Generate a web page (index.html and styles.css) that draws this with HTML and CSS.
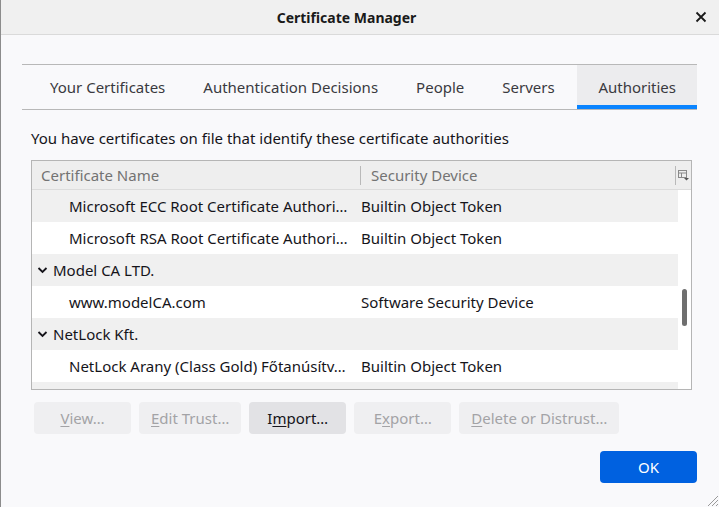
FILE: index.html
```html
<!DOCTYPE html>
<html>
<head>
<meta charset="utf-8">
<link rel="stylesheet" href="styles.css">
</head>
<body>
<div class="window">
  <div class="titlebar">
    <span class="title">Certificate Manager</span>
    <span class="close">
      <svg width="12" height="12" viewBox="0 0 12 12"><path d="M1.5 1.5 L10.5 10.5 M10.5 1.5 L1.5 10.5" stroke="#1a1a1a" stroke-width="1.8" fill="none"/></svg>
    </span>
  </div>
  <div class="content">
    <div class="tabs">
      <div class="tab">Your Certificates</div>
      <div class="tab">Authentication Decisions</div>
      <div class="tab">People</div>
      <div class="tab">Servers</div>
      <div class="tab active">Authorities</div>
    </div>
    <div class="panel">
      <p class="desc">You have certificates on file that identify these certificate authorities</p>
      <div class="tree">
        <div class="tree-head">
          <div class="col col-name">Certificate Name</div>
          <div class="col col-dev">Security Device</div>
          <div class="picker">
            <svg width="11" height="11" viewBox="0 0 11 11"><rect x="0.5" y="0.5" width="8" height="7" fill="none" stroke="#8a8a8a"/><path d="M0.5 3 H8.5 M3.5 3 V7.5" stroke="#8a8a8a"/><path d="M6 8 H11 L8.5 10.5 Z" fill="#555"/></svg>
          </div>
        </div>
        <div class="tree-body">
          <div class="rows">
            <div class="row odd"><div class="cell name child">Microsoft ECC Root Certificate Authori…</div><div class="cell dev">Builtin Object Token</div></div>
            <div class="row"><div class="cell name child">Microsoft RSA Root Certificate Authori…</div><div class="cell dev">Builtin Object Token</div></div>
            <div class="row odd"><div class="cell name parent"><svg class="twisty" width="11" height="10" viewBox="0 0 11 10"><path d="M1.5 3 L5.5 7 L9.5 3" stroke="#15141a" stroke-width="1.8" fill="none"/></svg>Model CA LTD.</div><div class="cell dev"></div></div>
            <div class="row"><div class="cell name child">www.modelCA.com</div><div class="cell dev">Software Security Device</div></div>
            <div class="row odd"><div class="cell name parent"><svg class="twisty" width="11" height="10" viewBox="0 0 11 10"><path d="M1.5 3 L5.5 7 L9.5 3" stroke="#15141a" stroke-width="1.8" fill="none"/></svg>NetLock Kft.</div><div class="cell dev"></div></div>
            <div class="row"><div class="cell name child">NetLock Arany (Class Gold) Főtanúsítv…</div><div class="cell dev">Builtin Object Token</div></div>
            <div class="row odd partial"><div class="cell name child"></div><div class="cell dev"></div></div>
          </div>
          <div class="scrollbar"><div class="thumb"></div></div>
        </div>
      </div>
      <div class="buttons">
        <button class="btn disabled"><u>V</u>iew…</button>
        <button class="btn disabled"><u>E</u>dit Trust…</button>
        <button class="btn">I<u>m</u>port…</button>
        <button class="btn disabled">E<u>x</u>port…</button>
        <button class="btn disabled"><u>D</u>elete or Distrust…</button>
      </div>
    </div>
    <div class="footer">
      <button class="btn primary">OK</button>
    </div>
  </div>
  <svg class="grip" width="14" height="14" viewBox="0 0 14 14"><path d="M13 3 L3 13 M13 7 L7 13 M13 11 L11 13" stroke="#9a9a9a" stroke-width="1"/></svg>
</div>
</body>
</html>
```

FILE: styles.css
```css
* { box-sizing: border-box; }
html, body { margin: 0; padding: 0; }
body {
  width: 719px;
  height: 507px;
  overflow: hidden;
  font-family: "Noto Sans", "Open Sans", sans-serif;
  font-size: 15px;
  color: #15141a;
  background: #f9f9fb;
}
.window {
  position: relative;
  width: 719px;
  height: 507px;
  border-left: 1px solid #8c8c8c;
  background: #f9f9fb;
}
.titlebar {
  position: relative;
  height: 35px;
  background: #f0f0f0;
  border-bottom: 1px solid #dadada;
  display: flex;
  align-items: center;
  justify-content: center;
  padding-right: 27px;
}
.title {
  font-weight: bold;
  font-size: 14px;
  color: #1a1a1a;
}
.close {
  position: absolute;
  right: 12px;
  top: 11px;
  display: flex;
}
.content {
  padding: 29px 22px 0 21px;
}
.tabs {
  display: flex;
  border-top: 1px solid #b8b8b8;
  border-bottom: 1px solid #b8b8b8;
  padding-left: 9px;
  height: 46px;
}
.tab {
  flex: none;
  white-space: nowrap;
  height: 44px;
  padding: 0 19px;
  display: flex;
  align-items: center;
  color: #3a3a3f;
  font-size: 15px;
}
.tab.active {
  margin-left: auto;
  background: #ececee;
  border-bottom: 4px solid #0a84ff;
  padding: 4px 21px 0 21px;
  height: 44px;
}
.panel {
  padding: 0 5px 0 9px;
}
.desc {
  margin: 18px 0 12px 0;
  line-height: 20px;
  font-size: 15px;
}
.tree {
  border: 1px solid #b5b5b5;
  background: #ffffff;
  height: 230px;
  display: flex;
  flex-direction: column;
  overflow: hidden;
}
.tree-head {
  display: flex;
  align-items: center;
  height: 29px;
  background: #eeeeee;
  border-bottom: 1px solid #dcdcdc;
  color: #737373;
  font-size: 15px;
  flex: none;
}
.col { height: 29px; display: flex; align-items: center; }
.col-name {
  width: 328px;
  padding-left: 9px;
}
.col-dev {
  flex: 1;
  padding-left: 10px;
  border-left: 1px solid #b9b9b9;
  height: 19px;
}
.picker {
  width: 16px;
  height: 19px;
  display: flex;
  align-items: center;
  justify-content: center;
  border-left: 1px solid #b9b9b9;
}
.tree-body {
  display: flex;
  flex: 1;
  overflow: hidden;
}
.rows { flex: 1; }
.row {
  display: flex;
  height: 32px;
  align-items: center;
  background: #ffffff;
  font-size: 15px;
}
.row.odd { background: #f0f0f0; }
.cell {
  white-space: nowrap;
  overflow: hidden;
}
.cell.name {
  width: 328px;
  padding-right: 2px;
}
.cell.child { padding-left: 37px; }
.cell.parent {
  padding-left: 5px;
  display: flex;
  align-items: center;
}
.twisty { margin-right: 5px; flex: none; }
.cell.dev {
  flex: 1;
  padding-left: 1px;
}
.scrollbar {
  width: 13px;
  position: relative;
  background: #ffffff;
  flex: none;
}
.thumb {
  position: absolute;
  left: 4px;
  top: 99px;
  width: 5px;
  height: 37px;
  border-radius: 3px;
  background: #6f6f6f;
}
.buttons {
  display: flex;
  gap: 8px;
  margin-top: 12px;
  padding-left: 3px;
}
.btn {
  font-family: inherit;
  font-size: 15px;
  height: 32px;
  min-width: 97px;
  padding: 0 12px;
  border: none;
  border-radius: 4px;
  background: #e2e2e5;
  color: #15141a;
}
.btn u { text-decoration-thickness: 1px; text-underline-offset: 2px; }
.btn.disabled {
  background: #efeff1;
  color: #a3a3a6;
}
.footer {
  display: flex;
  justify-content: flex-end;
  margin-top: 17px;
}
.btn.primary {
  width: 97px;
  background: #0061e0;
  color: #ffffff;
}
.grip {
  position: absolute;
  right: 0;
  bottom: 0;
}
```
